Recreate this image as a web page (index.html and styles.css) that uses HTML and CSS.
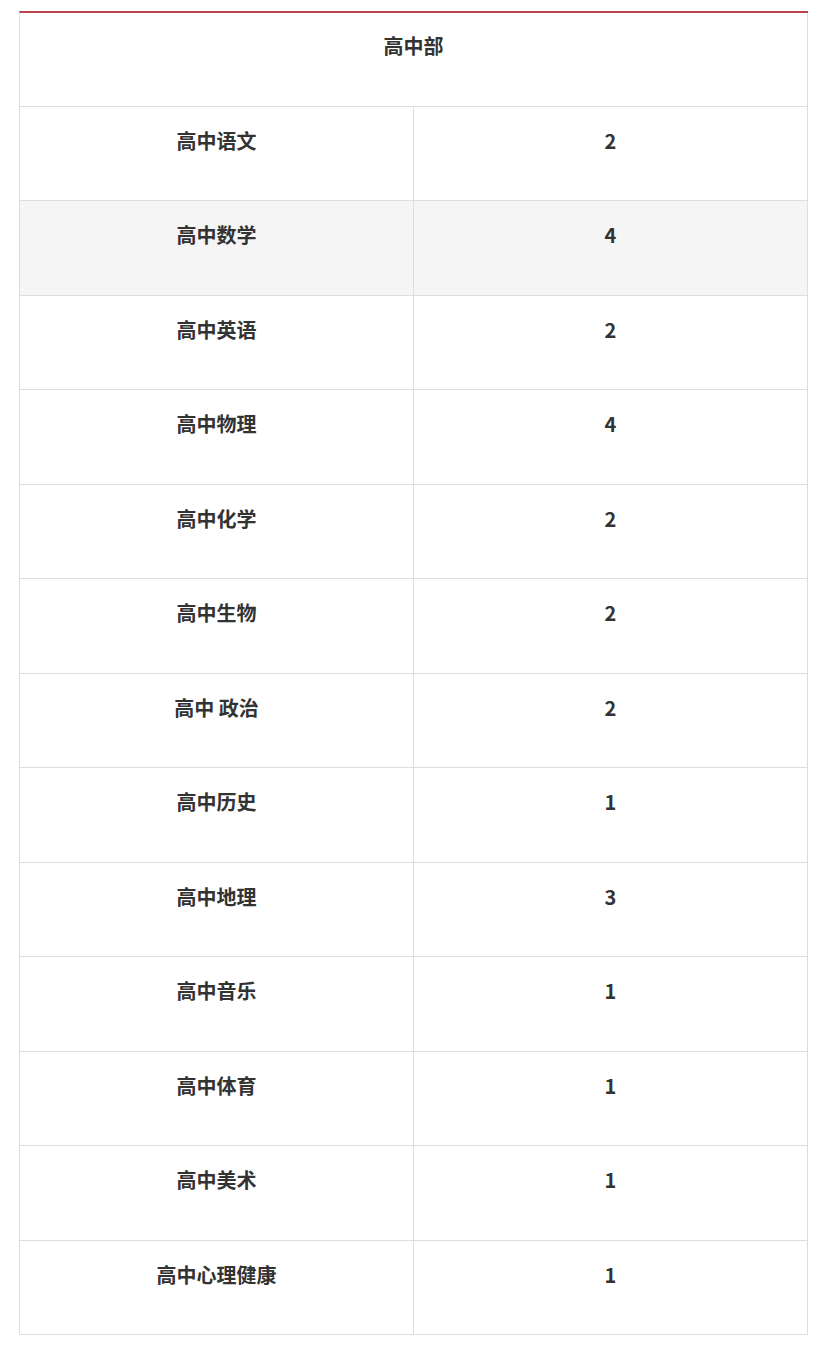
FILE: index.html
```html
<!DOCTYPE html>
<html lang="zh">
<head>
<meta charset="utf-8">
<link rel="stylesheet" href="styles.css">
</head>
<body>
<div class="table">
  <div class="row head"><div class="cell full">高中部</div></div>
  <div class="row"><div class="cell">高中语文</div><div class="cell">2</div></div>
  <div class="row alt"><div class="cell">高中数学</div><div class="cell">4</div></div>
  <div class="row"><div class="cell">高中英语</div><div class="cell">2</div></div>
  <div class="row"><div class="cell">高中物理</div><div class="cell">4</div></div>
  <div class="row"><div class="cell">高中化学</div><div class="cell">2</div></div>
  <div class="row"><div class="cell">高中生物</div><div class="cell">2</div></div>
  <div class="row"><div class="cell">高中 政治</div><div class="cell">2</div></div>
  <div class="row"><div class="cell">高中历史</div><div class="cell">1</div></div>
  <div class="row"><div class="cell">高中地理</div><div class="cell">3</div></div>
  <div class="row"><div class="cell">高中音乐</div><div class="cell">1</div></div>
  <div class="row"><div class="cell">高中体育</div><div class="cell">1</div></div>
  <div class="row"><div class="cell">高中美术</div><div class="cell">1</div></div>
  <div class="row"><div class="cell">高中心理健康</div><div class="cell">1</div></div>
</div>
</body>
</html>
```

FILE: styles.css
```css
html, body {
  margin: 0;
  padding: 0;
  background: #ffffff;
}
body {
  padding: 11px 19px 0 19px;
  font-family: "Noto Sans CJK SC", "Noto Sans", "Liberation Sans", sans-serif;
  color: #333333;
}
.table {
  width: 789px;
  border-top: 2px solid #b8414b;
  border-left: 1px solid #dddddd;
  box-sizing: border-box;
  display: grid;
  grid-template-rows: 93.5px;
  grid-auto-rows: 94.5px;
}
.row {
  display: grid;
  grid-template-columns: 394px 394px;
  border-bottom: 1px solid #dddddd;
  box-sizing: border-box;
}
.row.alt {
  background: #f5f5f5;
}
.cell {
  border-right: 1px solid #dddddd;
  text-align: center;
  font-weight: 700;
  font-size: 20px;
  line-height: 28px;
  padding-top: 20px;
}
.row.head .cell {
  padding-top: 19px;
}
.cell.full {
  grid-column: 1 / 3;
}
```
